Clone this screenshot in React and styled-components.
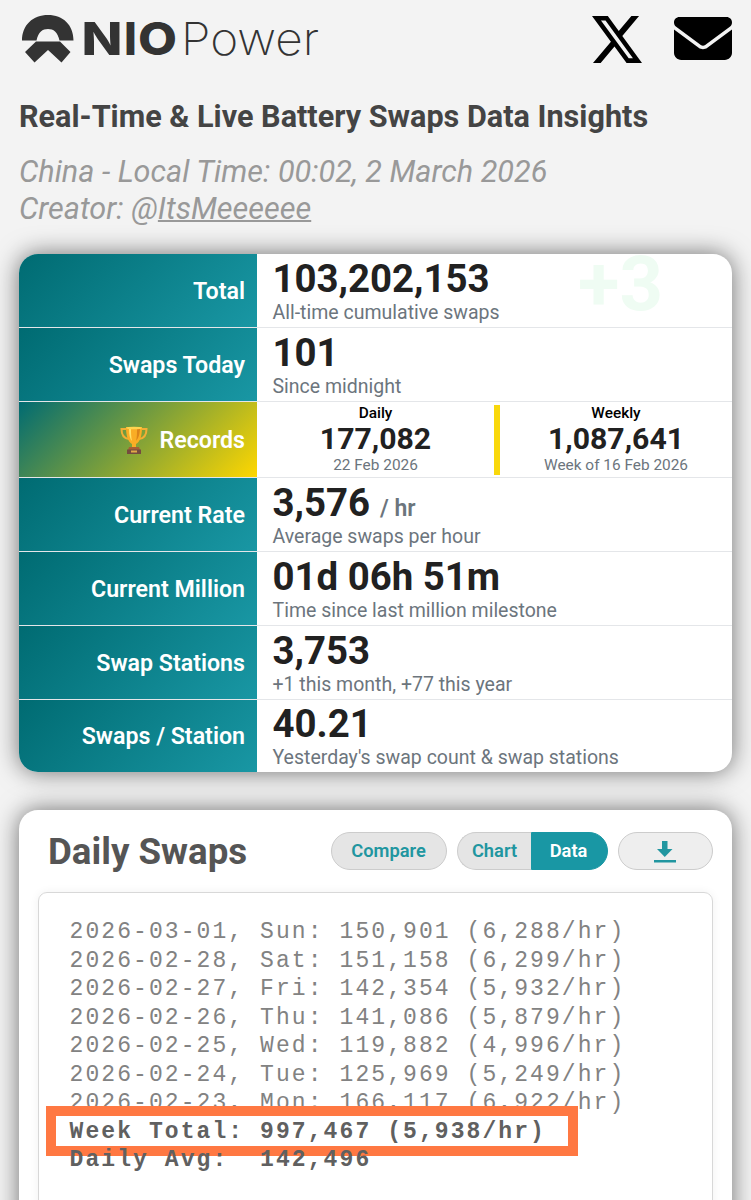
import * as React from "react"
import styled, { createGlobalStyle } from 'styled-components'
import { FaEnvelope } from 'react-icons/fa6'

const stats = [
  { label: 'Total', value: '103,202,153', note: 'All-time cumulative swaps', bump: '+3', height: 74 },
  { label: 'Swaps Today', value: '101', note: 'Since midnight', height: 74 },
  { label: 'Records', records: true, height: 76 },
  { label: 'Current Rate', value: '3,576', unit: '/ hr', note: 'Average swaps per hour', height: 74 },
  { label: 'Current Million', value: '01d 06h 51m', note: 'Time since last million milestone', height: 74 },
  { label: 'Swap Stations', value: '3,753', note: '+1 this month, +77 this year', height: 74 },
  { label: 'Swaps / Station', value: '40.21', note: "Yesterday's swap count & swap stations", height: 72 },
]

const records = [
  { period: 'Daily', value: '177,082', date: '22 Feb 2026' },
  { period: 'Weekly', value: '1,087,641', date: 'Week of 16 Feb 2026' },
]

const days = [
  '2026-03-01, Sun: 150,901 (6,288/hr)',
  '2026-02-28, Sat: 151,158 (6,299/hr)',
  '2026-02-27, Fri: 142,354 (5,932/hr)',
  '2026-02-26, Thu: 141,086 (5,879/hr)',
  '2026-02-25, Wed: 119,882 (4,996/hr)',
  '2026-02-24, Tue: 125,969 (5,249/hr)',
  '2026-02-23, Mon: 166,117 (6,922/hr)',
]

const Logo = () => (
  <LogoSvg viewBox="0 -8 310 64" aria-label="NIO Power">
    <path d="M0 27.500C0 12 11 2 26 2S51.500 12 51.500 27.500H37.500C35.500 18.500 31.500 16 26 16S16.500 18.500 14.500 27.500Z" />
    <path d="M14 28.500H38L48.500 39L39.500 49.500L26 37L12.500 49.500L3 39Z" />
    <LogoBold>
      <tspan x="59.500" textLength="41" lengthAdjust="spacingAndGlyphs">N</tspan>
      <tspan x="102">I</tspan>
      <tspan x="116" textLength="39" lengthAdjust="spacingAndGlyphs">O</tspan>
    </LogoBold>
    <LogoThin x="159" y="41.500" textLength="138" lengthAdjust="spacingAndGlyphs">Power</LogoThin>
  </LogoSvg>
)

const XLogo = () => (
  <XSvg viewBox="0 0 16 14.5" preserveAspectRatio="none">
    <path d="M12.6 0h2.454l-5.36 6.142L16 14.500h-4.937l-3.867-5.070-4.425 5.070H.316l5.733-6.570L0 0h5.063l3.495 4.633L12.601 0Zm-.86 13.028h1.360L4.323 1.395H2.865z" />
  </XSvg>
)

const Trophy = () => (
  <TrophySvg viewBox="0 0 28 28">
    <path d="M6 3H1.500C1.500 9 4 12.500 9 13M22 3h4.500C26.500 9 24 12.500 19 13" fill="none" stroke="#f3ae35" strokeWidth="2" />
    <path d="M6 1h16c0 9-2 15-6 17v4h-4v-4C8 16 6 10 6 1Z" fill="#f9ad25" />
    <path d="M9 3c0 6 1 10 3 12-1-4-1-8-1-12Z" fill="#ffe36b" />
    <path d="M17 3h3c-.5 6-1.500 9-4 12 1-4 1-8 1-12Z" fill="#dc8519" />
    <ellipse cx="14" cy="2" rx="8" ry="1.300" fill="#ffd34f" />
    <path d="M9 21h10l1 3H8Z" fill="#a65f35" />
    <path d="M7 23.500h14V28H7Z" fill="#754c3e" />
    <path d="M11 24.500h6v2h-6Z" fill="#e3aa48" />
  </TrophySvg>
)

const DownloadIcon = () => (
  <svg width="22" height="22" viewBox="0 0 22 22" fill="#2196a0">
    <path d="M8 0h5.500v8h5l-7.750 8L3 8h5Z" />
    <path d="M0 19h22v2.500H0Z" />
  </svg>
)

const Records = () => (
  <RecordCell>
    {records.map((item, index) => (
      <Record key={index} $divided={index === 0}>
        <Period>{item.period}</Period>
        <RecordValue>{item.value}</RecordValue>
        <RecordDate>{item.date}</RecordDate>
      </Record>
    ))}
  </RecordCell>
)

const App = () => {
  return (
    <Page>
      <GlobalStyle />
      <Header>
        <Logo />
        <Links>
          <XLogo />
          <MailIcon preserveAspectRatio="none" viewBox="0 64 512 384" />
        </Links>
      </Header>
      <Title>Real-Time &amp; Live Battery Swaps Data Insights</Title>
      <Info>
        China - Local Time: 00:02, 2 March 2026<br />
        Creator: @<Creator>ItsMeeeeee</Creator>
      </Info>

      <StatsCard>
        {stats.map((item, index) => (
          <Row key={index} $height={item.height}>
            <Label $gold={item.records}>
              {item.records && <Trophy />}
              {item.label}
            </Label>
            {item.records ? <Records /> : (
              <Cell>
                <Value>{item.value}{item.unit && <Unit>{item.unit}</Unit>}</Value>
                <Note>{item.note}</Note>
                {item.bump && <Bump>{item.bump}</Bump>}
              </Cell>
            )}
          </Row>
        ))}
      </StatsCard>

      <DailyCard>
        <DailyHead>
          <DailyTitle>Daily Swaps</DailyTitle>
          <Compare>Compare</Compare>
          <Toggle>
            <Tab>Chart</Tab>
            <Tab $active>Data</Tab>
          </Toggle>
          <Download><DownloadIcon /></Download>
        </DailyHead>
        <DataPanel>
          {days.map((day) => <Line key={day}>{day}</Line>)}
          <Line $bold>
            Week Total: 997,467 (5,938/hr)
            <Highlight />
          </Line>
          <Line $bold>Daily Avg:  142,496</Line>
        </DataPanel>
      </DailyCard>
    </Page>
  )
}

export default App

const GlobalStyle = createGlobalStyle`
  * {
    box-sizing: border-box;
  }
  body {
    margin: 0;
    background: #f3f3f3;
    font-family: Roboto, sans-serif;
    overflow: hidden;
  }
`
const Page = styled.div`
  height: 1200px;
  padding: 12px 19px 0;
  overflow: hidden;
`
const Header = styled.header`
  display: flex;
  justify-content: space-between;
  height: 52px;
`
const LogoSvg = styled.svg`
  width: 310px;
  height: 64px;
  margin: -7px 0 0 3px;
  overflow: visible;
  fill: #333;
`
const LogoBold = styled.text`
  font: 800 45px Inter, sans-serif;
  transform: translateY(41.5px);
`
const LogoThin = styled.text`
  font: 200 45px Inter, sans-serif;
`
const Links = styled.div`
  display: flex;
  gap: 32px;
`
const XSvg = styled.svg`
  width: 50px;
  height: 47px;
  margin-top: 4px;
`
const MailIcon = styled(FaEnvelope)`
  width: 58px;
  height: 43px;
  margin-top: 5px;
`
const Title = styled.h1`
  margin: 34px 0 0;
  color: #444;
  font-size: 30.6px;
  font-weight: 700;
  line-height: 38px;
  white-space: nowrap;
`
const Info = styled.div`
  margin-top: 17px;
  color: #999;
  font-size: 30.6px;
  font-style: italic;
  line-height: 37px;
  white-space: nowrap;
`
const Creator = styled.span`
  text-decoration: underline;
  text-decoration-thickness: 2px;
`
const Card = styled.section`
  background: white;
  border-radius: 19px;
  box-shadow: 0 0 24px rgba(0, 0, 0, 0.55);
`
const StatsCard = styled(Card)`
  height: 518px;
  margin-top: 27px;
`
const Label = styled.div`
  display: flex;
  align-items: center;
  justify-content: flex-end;
  padding-right: 12px;
  color: white;
  font-size: 23.2px;
  font-weight: 600;
  background: ${(props) => props.$gold
    ? 'linear-gradient(135deg, #006b72, #ffd700)'
    : 'linear-gradient(135deg, #006b72, #1997a4)'};
`
const Row = styled.div`
  display: grid;
  grid-template-columns: 238px 1fr;
  height: ${(props) => props.$height}px;
  border-bottom: 1px solid #e4e6e9;

  &:first-child ${Label} {
    border-top-left-radius: 19px;
  }
  &:last-child {
    border-bottom: 0;
  }
  &:last-child ${Label} {
    border-bottom-left-radius: 19px;
  }
`
const TrophySvg = styled.svg`
  width: 28px;
  height: 28px;
  margin-right: 11px;
`
const Cell = styled.div`
  position: relative;
  padding: 3px 0 0 15.5px;

  ${Row}:last-child & {
    padding-top: 2px;
  }
`
const Value = styled.div`
  height: 44px;
  color: #212121;
  font-size: 38.4px;
  font-weight: 700;
  line-height: 44px;
`
const Unit = styled.span`
  margin-left: 10px;
  color: #6c757d;
  font-size: 23px;
  font-weight: 600;
  line-height: 1;
`
const Note = styled.div`
  color: #6c757d;
  font-size: 19.5px;
  line-height: 24px;
`
const Bump = styled.div`
  position: absolute;
  top: -7px;
  left: 321px;
  color: #effcf3;
  font-size: 76px;
  font-weight: 700;
  line-height: 75px;
`
const RecordCell = styled.div`
  display: flex;
  padding: 3px 0 2px;
`
const Record = styled.div`
  flex: ${(props) => (props.$divided ? '0 0 243px' : '1')};
  border-right: ${(props) => (props.$divided ? '6px solid #f9d80c' : '0')};
  text-align: center;
`
const Period = styled.div`
  color: black;
  font-size: 15.4px;
  font-weight: 500;
  line-height: 16px;
`
const RecordValue = styled.div`
  color: #212121;
  font-size: 30.2px;
  font-weight: 700;
  line-height: 36px;
`
const RecordDate = styled.div`
  color: #6c757d;
  font-size: 15.4px;
  line-height: 16px;
`
const DailyCard = styled(Card)`
  height: 440px;
  margin-top: 38px;
  padding: 22px 19px 0;
`
const DailyHead = styled.div`
  display: flex;
  gap: 10px;
  height: 38px;
`
const DailyTitle = styled.h2`
  flex: 1;
  margin: 0 0 0 10px;
  color: #555;
  font-size: 36.7px;
  font-weight: 700;
  line-height: 39px;
`
const Button = styled.button`
  display: flex;
  align-items: center;
  justify-content: center;
  height: 38px;
  padding: 0 1px 1px 0;
  border: 1px solid #ccc;
  border-radius: 19px;
  background: #e5e5e5;
  color: #2196a0;
  font: 600 18.3px Roboto, sans-serif;
`
const Compare = styled(Button)`
  width: 116px;
`
const Toggle = styled.div`
  display: flex;
  width: 151px;
`
const Tab = styled(Button)`
  width: ${(props) => (props.$active ? '77px' : '74px')};
  padding-right: ${(props) => (props.$active ? '2px' : '0')};
  border-color: ${(props) => (props.$active ? '#1997a4' : '#ccc')};
  border-radius: ${(props) => (props.$active ? '0 19px 19px 0' : '19px 0 0 19px')};
  border-right-width: ${(props) => (props.$active ? '1px' : '0')};
  background: ${(props) => (props.$active ? '#1997a4' : '#e5e5e5')};
  color: ${(props) => (props.$active ? 'white' : '#2196a0')};
`
const Download = styled(Button)`
  width: 95px;
  padding: 1px 2px 0 0;
  background: #eee;
`
const DataPanel = styled.div`
  height: 400px;
  margin-top: 22px;
  padding: 25px 30.5px;
  border: 1px solid #d8d8d8;
  border-radius: 9px;
  box-shadow: 0 0 10px rgba(0, 0, 0, 0.06);
`
const Line = styled.div`
  position: relative;
  height: 28.5px;
  color: ${(props) => (props.$bold ? '#606060' : '#828282')};
  font-family: "Liberation Mono", monospace;
  font-size: 23px;
  font-weight: ${(props) => (props.$bold ? 700 : 400)};
  letter-spacing: 2.08px;
  line-height: 28.5px;
  white-space: pre;
`
const Highlight = styled.div`
  position: absolute;
  top: -11.5px;
  left: -24px;
  width: 532px;
  height: 50px;
  border: 10px solid #ff7842;
`
